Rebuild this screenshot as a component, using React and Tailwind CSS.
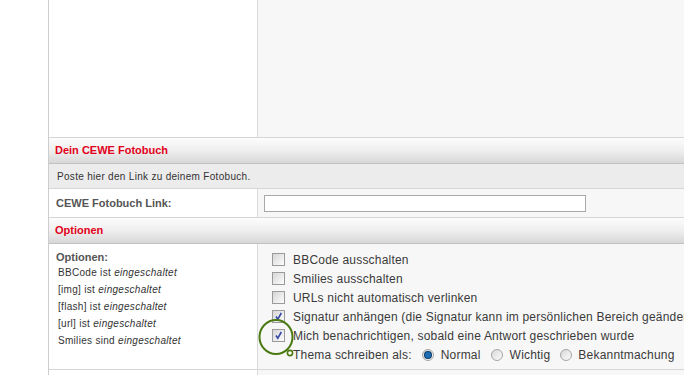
const Checkbox = ({ checked }) => (
  <span className="relative inline-block w-[13px] h-[13px] shrink-0 border border-[#9a9a9a] bg-gradient-to-br from-[#d6d6d6] to-[#fdfdfd]">
    {checked && (
      <svg viewBox="0 0 11 11" className="absolute left-0 top-0 w-[11px] h-[11px]">
        <path d="M3 5.5 L4.8 8.3 L8.3 2" fill="none" stroke="#3346a8" strokeWidth="1.6" />
      </svg>
    )}
  </span>
);

const Radio = ({ checked }) => (
  <span className="inline-flex items-center justify-center w-[12px] h-[12px] shrink-0 rounded-full border border-[#a5a5a5] bg-gradient-to-br from-[#d8d8d8] to-[#fcfcfc]">
    {checked && (
      <span className="w-[6px] h-[6px] rounded-full bg-[#1c6db3] ring-1 ring-[#0d3a66]" />
    )}
  </span>
);

const Header = ({ children }) => (
  <div className="h-[26px] flex items-center pl-[6px] border-b border-[#c2c2c2] bg-gradient-to-b from-[#fcfcfc] via-[#efefef] to-[#d7d7d7] text-[11px] font-bold text-[#e2001a]">
    {children}
  </div>
);

const options = [
  { label: "BBCode ausschalten", checked: false },
  { label: "Smilies ausschalten", checked: false },
  { label: "URLs nicht automatisch verlinken", checked: false },
  { label: "Signatur anhängen (die Signatur kann im persönlichen Bereich geändert werden)", checked: true },
  { label: "Mich benachrichtigen, sobald eine Antwort geschrieben wurde", checked: true },
];

const status = [
  ["BBCode ist", "eingeschaltet"],
  ["[img] ist", "eingeschaltet"],
  ["[flash] ist", "eingeschaltet"],
  ["[url] ist", "eingeschaltet"],
  ["Smilies sind", "eingeschaltet"],
];

export default function App() {
  return (
    <div className="w-[684px] h-[375px] overflow-hidden bg-white flex font-['Liberation_Sans',Arial,sans-serif] text-[#333]">
      <div className="w-[48px] shrink-0" />
      <div className="flex-1 flex flex-col border-l border-[#cdcdcd] min-w-0">
        {/* top message area */}
        <div className="h-[138px] shrink-0 flex border-b border-[#d6d6d6]">
          <div className="w-[209px] shrink-0 bg-white border-r border-[#dadada]" />
          <div className="flex-1 bg-[#f7f7f7]" />
        </div>

        <Header>Dein CEWE Fotobuch</Header>

        <div className="h-[25px] shrink-0 flex items-center pl-[8px] bg-[#ececec] border-b border-[#d6d6d6] text-[10px] tracking-[0.3px] text-[#333]">
          Poste hier den Link zu deinem Fotobuch.
        </div>

        <div className="h-[29px] shrink-0 flex border-b border-[#d6d6d6]">
          <div className="w-[209px] shrink-0 bg-white border-r border-[#dadada] flex items-center pl-[7px] text-[11px] font-bold text-[#555]">
            CEWE Fotobuch Link:
          </div>
          <div className="flex-1 bg-[#f7f7f7] flex items-center pl-[6px]">
            <div className="w-[322px] h-[17px] border border-[#a8a8a8] bg-white" />
          </div>
        </div>

        <Header>Optionen</Header>

        <div className="h-[126px] shrink-0 flex border-b border-[#d6d6d6]">
          <div className="w-[209px] shrink-0 bg-white border-r border-[#dadada] pl-[7px] pt-[7px]">
            <div className="text-[11px] font-bold text-[#555] leading-[13px]">Optionen:</div>
            <div className="pl-[2px] text-[10px] tracking-[0.3px] text-[#333]">
              {status.map(([a, b]) => (
                <div key={a} className="h-[17px] flex items-center whitespace-nowrap">
                  {a}&nbsp;<i>{b}</i>
                </div>
              ))}
            </div>
          </div>
          <div className="relative flex-1 bg-[#f7f7f7] pl-[14px] pt-[6px] text-[12px] tracking-[0.2px] text-[#3a3a3a] overflow-hidden">
            {options.map((o) => (
              <div key={o.label} className="h-[19px] flex items-center gap-[8px] whitespace-nowrap">
                <Checkbox checked={o.checked} />
                <span>{o.label}</span>
              </div>
            ))}
            <div className="h-[19px] flex items-center whitespace-nowrap pl-[21px]">
              <span>Thema schreiben als:</span>
              <span className="ml-[10px] flex items-center gap-[7px]">
                <Radio checked />
                <span>Normal</span>
              </span>
              <span className="ml-[10px] flex items-center gap-[7px]">
                <Radio />
                <span>Wichtig</span>
              </span>
              <span className="ml-[10px] flex items-center gap-[6px]">
                <Radio />
                <span>Bekanntmachung</span>
              </span>
            </div>
            <svg className="absolute left-[0px] top-[74px] w-[40px] h-[42px] overflow-visible" viewBox="0 0 40 42">
              <ellipse cx="18" cy="19" rx="16.5" ry="17" fill="none" stroke="#4c7a12" strokeWidth="2" />
              <circle cx="32" cy="35" r="2.6" fill="#fff" stroke="#4c7a12" strokeWidth="1.6" />
            </svg>
          </div>
        </div>

        <div className="flex-1 flex">
          <div className="w-[209px] shrink-0 bg-white border-r border-[#dadada]" />
          <div className="flex-1 bg-[#f7f7f7]" />
        </div>
      </div>
    </div>
  );
}
